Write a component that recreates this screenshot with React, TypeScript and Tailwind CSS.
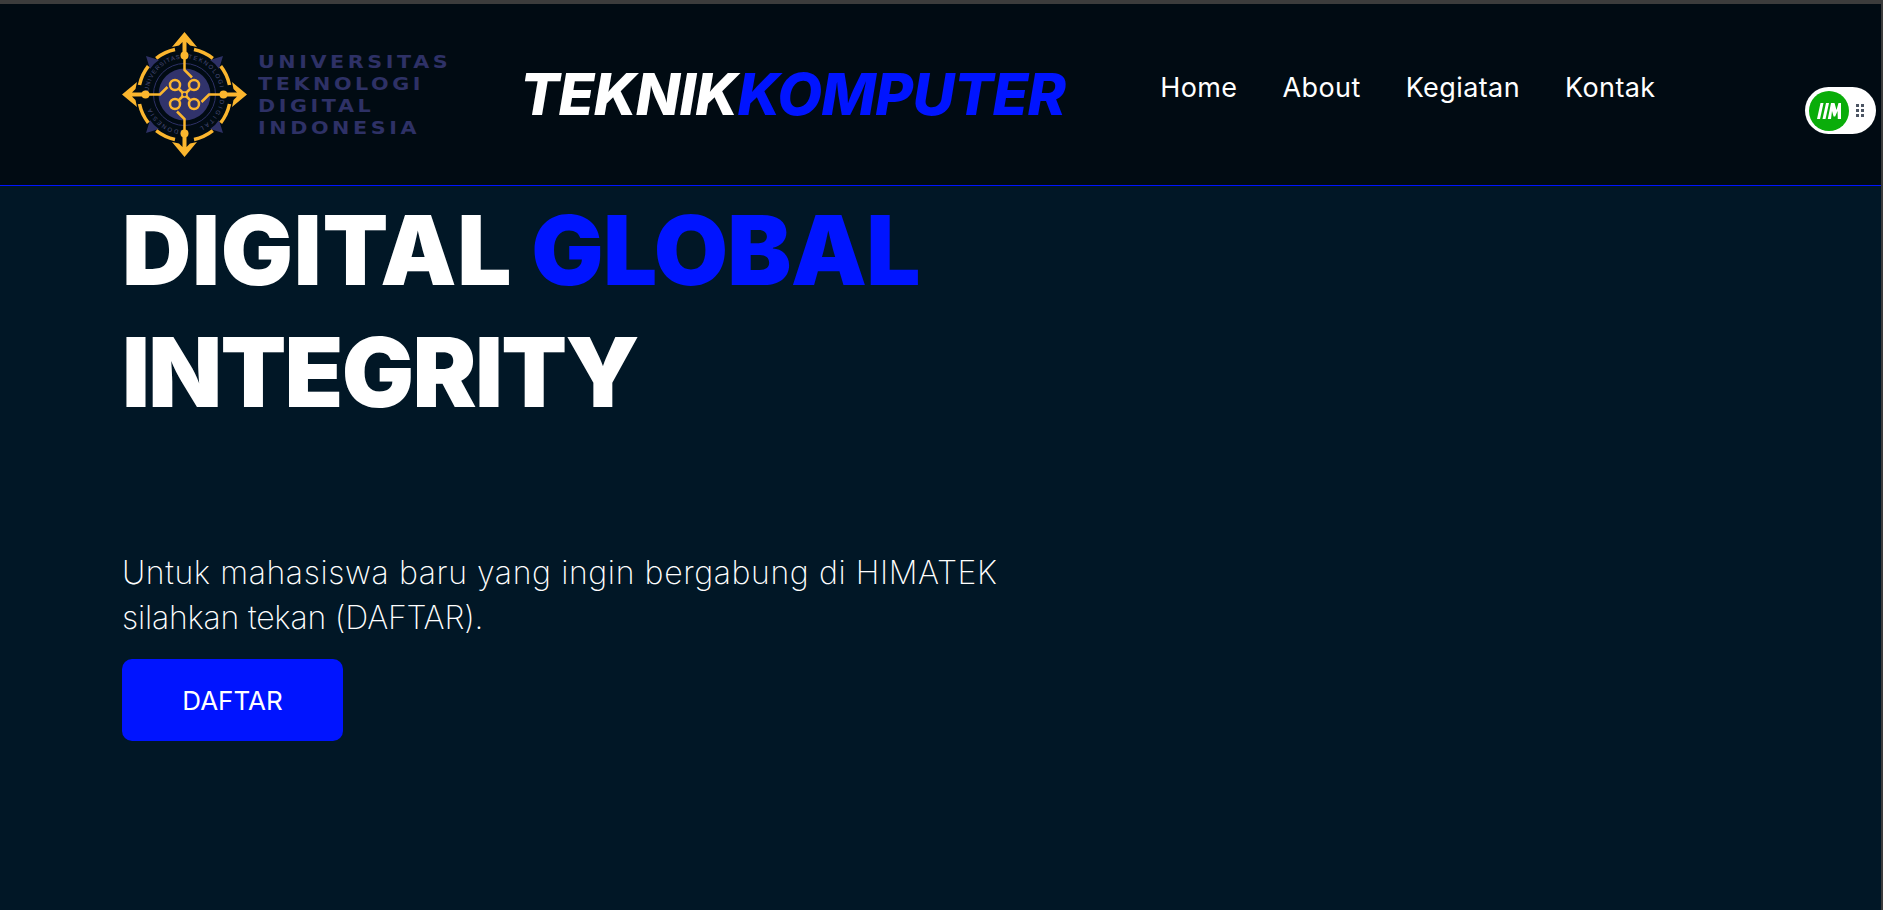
const RING_WORDS = [
  { word: "UNIVERSITAS", offset: 3, length: 49 },
  { word: "TEKNOLOGI", offset: 60, length: 46 },
  { word: "DIGITAL", offset: 118, length: 36 },
  { word: "INDONESIA", offset: 166, length: 46 },
];

const Logo = () => (
  <svg width="125" height="125" viewBox="0 0 125 125" className="shrink-0">
    <defs>
      <path id="logoRing" d="M26.5 62.5A36 36 0 1 1 98.5 62.5A36 36 0 1 1 26.5 62.5" />
    </defs>
    <circle cx="62.5" cy="62.5" r="26" fill="#31336b" />
    <circle cx="62.5" cy="62.5" r="31" fill="none" stroke="#2e3166" strokeWidth="1" />
    {RING_WORDS.map((w) => (
      <text key={w.word} fontSize="6" fill="#4a4d7c" fontFamily="Liberation Sans, sans-serif">
        <textPath href="#logoRing" startOffset={w.offset} textLength={w.length}>
          {w.word}
        </textPath>
      </text>
    ))}
    {/* the mark has four-fold symmetry: draw one quarter and rotate it */}
    {[0, 90, 180, 270].map((a) => (
      <g key={a} transform={`rotate(${a} 62.5 62.5)`}>
        <path d="M101 24L97 37L93 32L88 28Z" fill="#2e3166" />
        <path d="M62.5 0L75 15L68 13.5L64.5 10V20H60.5V10L57 13.5L50 15Z" fill="#fbb62e" />
        <circle cx="62.5" cy="23.5" r="4" fill="#fbb62e" />
        <g fill="none" stroke="#fbb62e">
          <path d="M72 17.5A46 46 0 0 1 90.8 26.3" strokeWidth="3.5" />
          <path d="M53 17.5A46 46 0 0 0 34.2 26.3" strokeWidth="3.5" />
          <path d="M62.5 23V38L70 45.5" strokeWidth="2.5" />
          <circle cx="72" cy="53" r="5" strokeWidth="2.5" />
          <path d="M68.5 56.5L60 65" strokeWidth="2.5" />
        </g>
      </g>
    ))}
    <circle cx="62.5" cy="62.5" r="2.5" fill="#31336b" stroke="#fbb62e" strokeWidth="1.5" />
  </svg>
);

const DragBadge = () => (
  <div className="absolute top-[87px] left-[1805px] flex h-[47px] w-[71px] items-center rounded-full bg-white pl-[4px]">
    <div className="flex h-[40px] w-[40px] items-center justify-center rounded-full bg-[#0aad0a]">
      <svg width="24" height="16" viewBox="0 0 24 16" fill="#fff">
        <path d="M3.5 0h3L3 16H0z" />
        <path d="M9 0h3L8.5 16h-3z" />
        <path d="M14 0h3.5l2 7 2-7H24v16h-3.2l-.3-8-2.3 5.5h-1.6L15 8l-1 8h-3.2z" />
      </svg>
    </div>
    <div className="ml-[7px] grid grid-cols-2 gap-[2px]">
      {[0, 1, 2, 3, 4, 5].map((i) => (
        <span key={i} className="h-[3px] w-[3px] bg-[#4b5563]" />
      ))}
    </div>
  </div>
);

export default function App() {
  return (
    <div className="relative flex h-[910px] flex-col overflow-hidden bg-[#011726] font-['Inter',sans-serif] text-white">
      <div className="h-[4px] shrink-0 bg-[#3c3c3c]" />
      <header className="flex h-[182px] shrink-0 items-center border-b border-[#0014ff] bg-[#010b13] pl-[122px]">
        <Logo />
        <div className="ml-[11px] w-[200px] origin-left scale-x-[1.15] font-['DejaVu_Sans',sans-serif] text-[18px] leading-[22px] font-bold tracking-[3.1px] whitespace-nowrap text-[#2e3166]">
          <div>UNIVERSITAS</div>
          <div>TEKNOLOGI</div>
          <div>DIGITAL</div>
          <div>INDONESIA</div>
        </div>
        <div className="ml-[62px] text-[58px] font-extrabold tracking-[-0.7px] italic">
          TEKNIK<span className="text-[#0014ff]">KOMPUTER</span>
        </div>
        <nav className="mt-[-12px] ml-[95px] flex gap-[45px] text-[27px] tracking-[0.4px]">
          <a>Home</a>
          <a>About</a>
          <a>Kegiatan</a>
          <a>Kontak</a>
        </nav>
      </header>
      <main className="pl-[122px]">
        <h1 className="pt-[3px] text-[96px] leading-[122px] font-black">
          <span className="tracking-[0.7px]">DIGITAL</span>{" "}
          <span className="tracking-[-0.8px] text-[#0014ff]">GLOBAL</span>
          <br />
          <span className="tracking-[-1.7px]">INTEGRITY</span>
        </h1>
        <p className="mt-[117px] text-[32px] leading-[45px] font-extralight">
          <span className="tracking-[0.6px]">Untuk mahasiswa baru yang ingin bergabung di HIMATEK</span>
          <br />
          <span className="tracking-[-0.2px]">silahkan tekan (DAFTAR).</span>
        </p>
        <button className="mt-[19px] h-[82px] w-[221px] rounded-[10px] bg-[#0014ff] text-[26px]">DAFTAR</button>
      </main>
      <DragBadge />
      <div className="absolute top-0 right-0 h-full w-[2px] bg-[#3c3c3c]" />
    </div>
  );
}
